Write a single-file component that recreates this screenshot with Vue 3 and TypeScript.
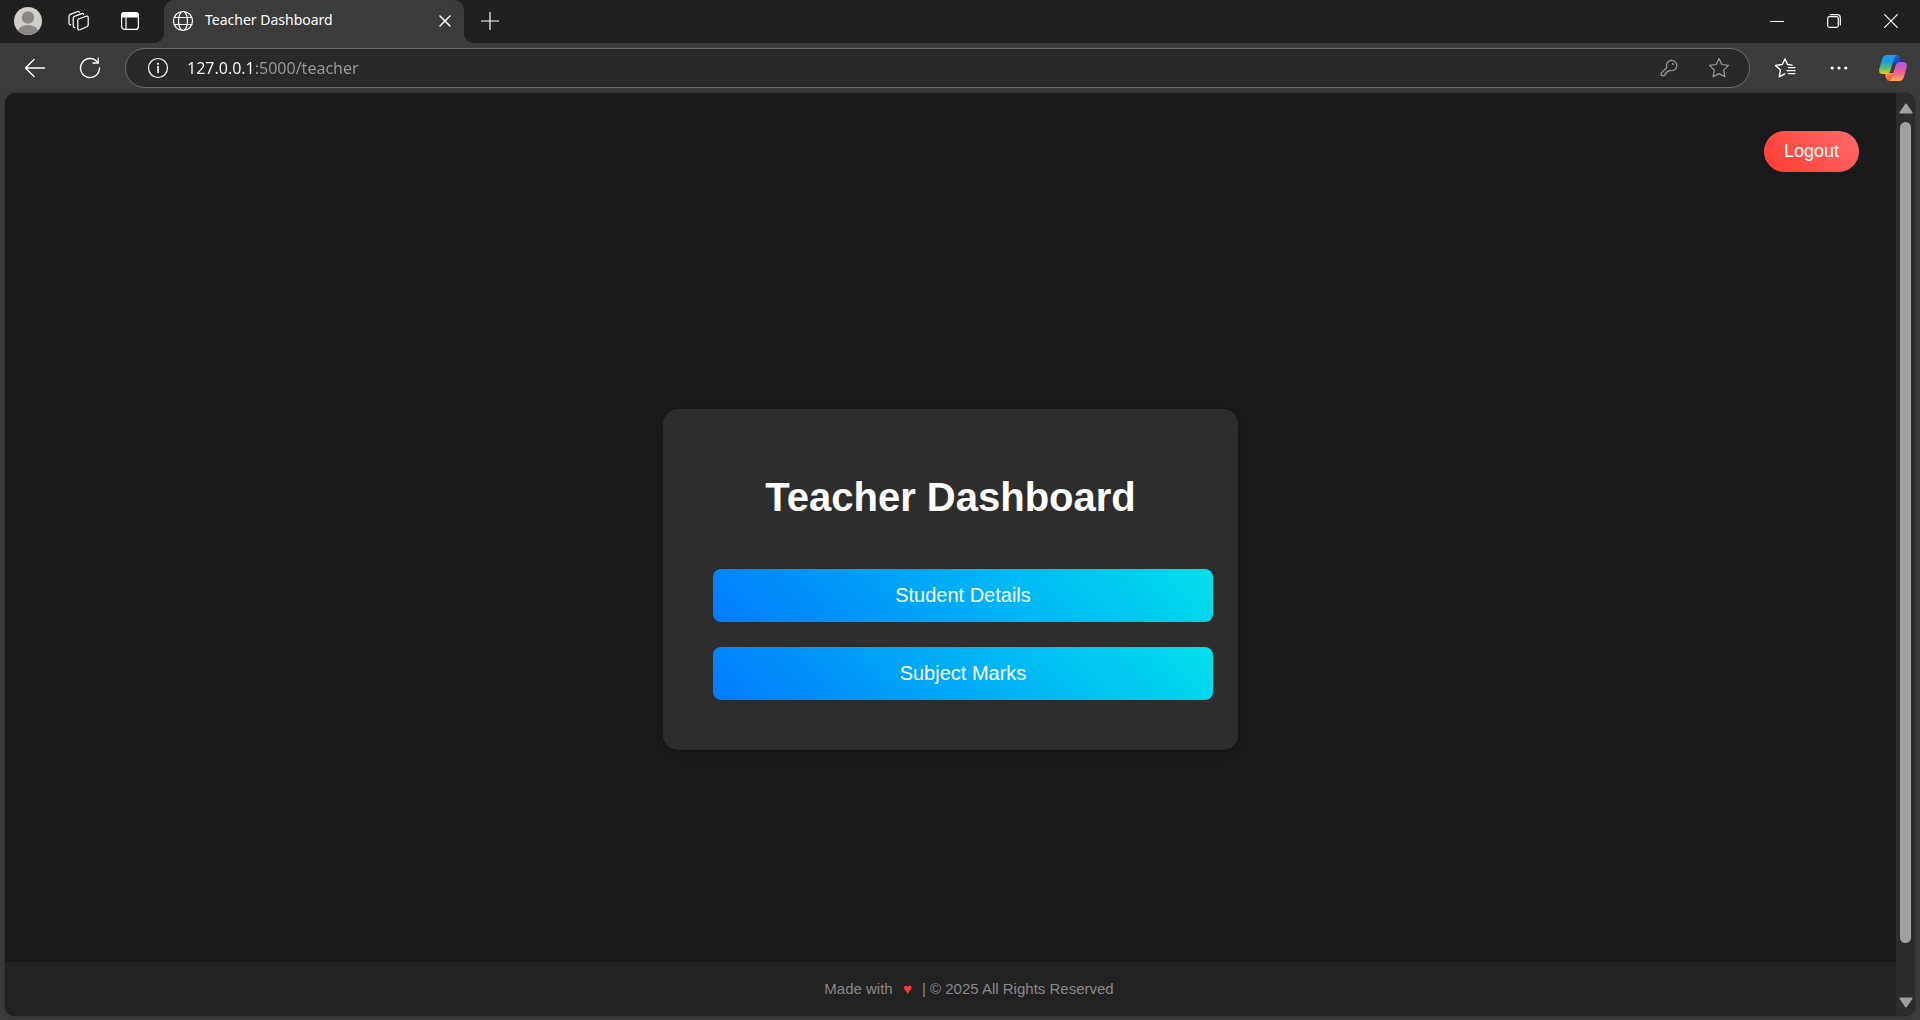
<script setup lang="ts">
import { ref } from 'vue'

interface MenuEntry {
  label: string
  href: string
}

const title = 'Teacher Dashboard'
const address = ref('127.0.0.1:5000/teacher')
const entries: MenuEntry[] = [
  { label: 'Student Details', href: '#student-details' },
  { label: 'Subject Marks', href: '#subject-marks' },
]
</script>

<template>
  <div class="browser">
    <header class="tab-bar">
      <button class="tool" type="button" aria-label="Profile">
        <svg width="28" height="28" viewBox="0 0 28 28">
          <defs>
            <clipPath id="avatar-clip"><circle cx="14" cy="14" r="14" /></clipPath>
          </defs>
          <circle cx="14" cy="14" r="14" fill="#d0cecb" />
          <g clip-path="url(#avatar-clip)" fill="#8c8886">
            <circle cx="14" cy="10.5" r="6.2" />
            <ellipse cx="14" cy="25" rx="10.5" ry="7" />
          </g>
        </svg>
      </button>
      <button class="tool" type="button" aria-label="Workspaces">
        <svg class="line" width="22" height="22" viewBox="0 0 22 22">
          <path d="M10.4 9 L18.2 6.2 Q20.2 5.6 20.2 7.6 V14.8 Q20.2 16.2 18.9 16.8 L12 19.8 Q9.8 20.6 9.8 18.4 V10.2 Q9.8 9.3 10.4 9 Z" />
          <path d="M6.9 17.6 Q5.2 17.6 5.2 15.8 V8.4 Q5.2 7 6.5 6.4 L13.6 3.6 Q15.2 3 15.6 4.6" />
          <path d="M2.7 14.8 Q1 14.8 1 13 V6.4 Q1 5 2.3 4.4 L9.4 1.6 Q11 1 11.4 2.4" />
        </svg>
      </button>
      <button class="tool" type="button" aria-label="Tab actions">
        <svg class="line" width="20" height="20" viewBox="0 0 20 20">
          <rect x="1.6" y="1.6" width="16.8" height="16.8" rx="3" />
          <path d="M1.6 6 V4.5 Q1.6 1.5 4.6 1.5 H15.4 Q18.4 1.5 18.4 4.5 V6 Z" fill="#fff" />
          <path d="M6 6 V18" />
        </svg>
      </button>

      <div class="tab">
        <svg class="line" width="22" height="22" viewBox="0 0 22 22">
          <circle cx="11" cy="11" r="9.5" />
          <ellipse cx="11" cy="11" rx="4.5" ry="9.5" />
          <path d="M2.4 7.5 H19.6 M2.4 14.5 H19.6" />
        </svg>
        <span class="tab-title">{{ title }}</span>
        <button class="tab-close" type="button" aria-label="Close tab">
          <svg class="line" width="12" height="12" viewBox="0 0 12 12">
            <path d="M1 1 L11 11 M11 1 L1 11" stroke-width="1.5" />
          </svg>
        </button>
      </div>
      <button class="tool" type="button" aria-label="New tab">
        <svg class="line" width="18" height="18" viewBox="0 0 18 18">
          <path d="M9 .5 V17.5 M.5 9 H17.5" />
        </svg>
      </button>

      <div class="window-controls">
        <button type="button" aria-label="Minimize">
          <svg class="line" width="14" height="14" viewBox="0 0 14 14">
            <path d="M.5 7.5 H13.5" stroke-width="1" />
          </svg>
        </button>
        <button type="button" aria-label="Restore">
          <svg class="line" width="14" height="14" viewBox="0 0 14 14">
            <rect x=".7" y="2.7" width="10.6" height="10.6" rx="1.8" />
            <path d="M3.2 .7 H10.3 Q13.3 .7 13.3 3.7 V10.8" />
          </svg>
        </button>
        <button type="button" aria-label="Close window">
          <svg class="line" width="14" height="14" viewBox="0 0 14 14">
            <path d="M.7 .7 L13.3 13.3 M13.3 .7 L.7 13.3" />
          </svg>
        </button>
      </div>
    </header>

    <div class="toolbar">
      <button class="nav" type="button" aria-label="Back">
        <svg class="line" width="22" height="20" viewBox="0 0 22 20">
          <path d="M20.5 10 H1.5 M10 1.5 L1.5 10 L10 18.5" stroke-width="1.4" />
        </svg>
      </button>
      <button class="nav" type="button" aria-label="Refresh">
        <svg class="line" width="22" height="22" viewBox="0 0 22 22">
          <path d="M18.8 5.6 A9.5 9.5 0 1 0 20.5 11" stroke-width="1.4" />
          <path d="M19.3 1.2 V6 H14" stroke-width="1.4" />
        </svg>
      </button>
      <form class="address" @submit.prevent>
        <button type="button" aria-label="Site information">
          <svg class="line" width="22" height="22" viewBox="0 0 22 22">
            <circle cx="11" cy="11" r="9.5" />
            <path d="M11 9.5 V15.5" stroke-width="1.6" />
            <circle cx="11" cy="6.8" r="1.1" fill="#fff" stroke="none" />
          </svg>
        </button>
        <input v-model="address" type="text" aria-label="Address" spellcheck="false" />
        <button type="button" aria-label="Passwords">
          <svg class="line dim" width="18" height="18" viewBox="0 0 18 18">
            <path d="M6.8 8.5 A5.2 5.2 0 1 1 9.6 11.3 L8.6 12.3 H7 V14 H5.2 V15.8 Q5.2 16.6 4.4 16.6 H1.9 Q1.2 16.6 1.2 15.9 V14.2 Z" />
            <circle cx="13" cy="5" r="1" class="dim-fill" />
          </svg>
        </button>
        <button type="button" aria-label="Add to favorites">
          <svg class="line dim" width="22" height="22" viewBox="0 0 22 22">
            <path d="M11 1.5 L13.8 7.5 L20.5 8.4 L15.6 13.1 L16.9 19.8 L11 16.6 L5.1 19.8 L6.4 13.1 L1.5 8.4 L8.2 7.5 Z" />
          </svg>
        </button>
      </form>
      <button class="side" type="button" aria-label="Favorites">
        <svg class="line" width="22" height="22" viewBox="0 0 22 22">
          <path d="M18 8.1 L13.6 7.5 L11 1.8 L8.3 7.5 L1.6 8.4 L6.4 13.1 L5.2 19.8 L10.6 16.9" stroke-width="1.4" />
          <path d="M14.5 10.6 H21 M13 13.6 H21 M14.5 16.6 H21" stroke-width="1.4" />
        </svg>
      </button>
      <button class="side" type="button" aria-label="Settings and more">
        <svg width="18" height="6" viewBox="0 0 18 6" fill="#fff">
          <circle cx="2.2" cy="3" r="1.6" />
          <circle cx="9" cy="3" r="1.6" />
          <circle cx="15.8" cy="3" r="1.6" />
        </svg>
      </button>
      <button class="side" type="button" aria-label="Copilot">
        <svg width="28" height="26" viewBox="0 0 28 26">
          <defs>
            <linearGradient id="cp-left" x1="0" y1="0" x2="0" y2="1">
              <stop offset="0" stop-color="#1b9cf0" />
              <stop offset=".35" stop-color="#1c9fd8" />
              <stop offset=".65" stop-color="#52b87a" />
              <stop offset="1" stop-color="#f6cf0a" />
            </linearGradient>
            <linearGradient id="cp-right" x1="0" y1="0" x2="0" y2="1">
              <stop offset="0" stop-color="#a45cf0" />
              <stop offset=".5" stop-color="#ef5a94" />
              <stop offset="1" stop-color="#fdae58" />
            </linearGradient>
            <linearGradient id="cp-top" x1="0" y1="0" x2="1" y2="1">
              <stop offset="0" stop-color="#1a78e8" />
              <stop offset="1" stop-color="#1636b8" />
            </linearGradient>
            <linearGradient id="cp-bottom" x1="0" y1="0" x2="1" y2="1">
              <stop offset="0" stop-color="#ffa03c" />
              <stop offset="1" stop-color="#f0483e" />
            </linearGradient>
          </defs>
          <path d="M13 0 H17.5 Q20 0 20.8 2.6 L22.2 8 H15 L13 8 Z" fill="url(#cp-top)" />
          <path d="M15 26 H10.5 Q8 26 7.2 23.4 L5.8 18 H13 L15 18 Z" fill="url(#cp-bottom)" />
          <path d="M8 0 H18 Q16 .4 15.2 3 L11.4 15.6 Q10.3 19 7 19 H4 Q-1 19 .4 13.6 L3 4.2 Q4.2 0 8 0 Z" fill="url(#cp-left)" />
          <path d="M20 26 H10 Q12 25.6 12.8 23 L16.6 10.4 Q17.7 7 21 7 H24 Q29 7 27.6 12.4 L25 21.8 Q23.8 26 20 26 Z" fill="url(#cp-right)" />
        </svg>
      </button>
    </div>

    <div class="viewport">
      <div class="page">
        <div class="top">
          <button class="logout" type="button">Logout</button>
        </div>
        <main class="content">
          <section class="card">
            <h1>{{ title }}</h1>
            <nav class="menu">
              <a v-for="entry in entries" :key="entry.href" :href="entry.href">{{ entry.label }}</a>
            </nav>
          </section>
        </main>
        <footer class="footer">
          <p>Made with <span class="heart">♥</span> | © 2025 All Rights Reserved</p>
        </footer>
      </div>
      <div class="scrollbar" aria-hidden="true">
        <svg width="14" height="11" viewBox="0 0 14 11">
          <path d="M7 1.5 L12.5 9.5 H1.5 Z" />
        </svg>
        <div class="thumb"></div>
        <svg width="14" height="11" viewBox="0 0 14 11">
          <path d="M7 9.5 L12.5 1.5 H1.5 Z" />
        </svg>
      </div>
    </div>
  </div>
</template>

<style>
body {
  background: #3b3b3b;
}
</style>

<style scoped>
.browser {
  display: flex;
  flex-direction: column;
  min-height: 100vh;
  box-sizing: border-box;
  background: #3b3b3b;
  color: #fff;
  font-family: "Noto Sans", "Open Sans", sans-serif;
}

button {
  display: flex;
  align-items: center;
  justify-content: center;
  padding: 0;
  border: 0;
  background: none;
  color: inherit;
}

svg {
  display: block;
  flex: none;
}

.line {
  fill: none;
  stroke: #fff;
  stroke-width: 1.2;
  stroke-linejoin: round;
  stroke-linecap: round;
}

.dim {
  stroke: #9a9a9a;
}

.dim-fill {
  fill: #9a9a9a;
  stroke: none;
}

.tab-bar {
  display: flex;
  height: 43px;
  padding: 0 1px 0 2px;
  background: #202020;
}

.tool {
  width: 51px;
  padding-bottom: 1px;
}

.tab {
  position: relative;
  display: flex;
  align-items: center;
  width: 300px;
  box-sizing: border-box;
  margin-left: 9px;
  padding: 0 13px 1px 8px;
  border-radius: 10px 10px 0 0;
  background: #3b3b3b;
}

.tab::before,
.tab::after {
  content: "";
  position: absolute;
  bottom: 0;
  width: 10px;
  height: 10px;
}

.tab::before {
  right: 100%;
  background: radial-gradient(circle at 0 0, #202020 10px, #3b3b3b 10px);
}

.tab::after {
  left: 100%;
  background: radial-gradient(circle at 100% 0, #202020 10px, #3b3b3b 10px);
}

.tab-title {
  flex: 1;
  margin-left: 11px;
  padding-bottom: 2px;
  font-size: 14px;
  line-height: 20px;
}

.window-controls {
  display: flex;
  margin-left: auto;
}

.window-controls button {
  width: 57px;
  padding-bottom: 1px;
}

.toolbar {
  display: flex;
  align-items: center;
  height: 50px;
  padding-left: 7px;
}

.nav {
  width: 55px;
  height: 40px;
}

.address {
  display: flex;
  flex: 1;
  align-items: center;
  height: 40px;
  box-sizing: border-box;
  margin: 0 8px;
  padding: 0 5px 0 7px;
  border: 1px solid #6b6b6b;
  border-radius: 20px;
  background: #292929;
}

.address button {
  width: 50px;
  height: 38px;
}

.address input {
  flex: 1;
  min-width: 0;
  height: 26px;
  padding: 0 0 0 4px;
  border: 0;
  outline: 0;
  background: linear-gradient(90deg, #fff 72px, #9a9a9a 72px);
  background-clip: text;
  -webkit-background-clip: text;
  color: transparent;
  font-family: inherit;
  font-size: 16px;
}

.side {
  width: 54px;
  height: 40px;
}

.viewport {
  display: flex;
  flex: 1;
  margin: 0 5px 4px;
  border-radius: 10px;
  overflow: hidden;
  background: #1a1a1a;
  box-shadow: 0 0 3px #2b2b2b;
}

.page {
  display: flex;
  flex: 1;
  flex-direction: column;
  font-family: "Liberation Sans", Arial, sans-serif;
}

.top {
  display: flex;
  justify-content: flex-end;
  padding: 38px 37px 25px;
}

.logout {
  padding: 10px 20px;
  border-radius: 25px;
  background: linear-gradient(45deg, #ff3b30, #ff6b6b);
  font-family: inherit;
  font-size: 18px;
  line-height: 21px;
}

.content {
  display: flex;
  flex: 1;
  align-items: center;
  justify-content: center;
}

.card {
  width: 575px;
  max-width: 100%;
  box-sizing: border-box;
  padding: 65px 25px 50px 50px;
  border-radius: 15px;
  background: #2d2d2d;
  box-shadow: 0 5px 19px rgba(0, 0, 0, 0.2);
}

h1 {
  margin: 0 25px 49px 0;
  font-size: 40px;
  line-height: 46px;
  text-align: center;
}

.menu {
  display: flex;
  flex-direction: column;
  gap: 25px;
}

.menu a {
  padding: 15px;
  border-radius: 8px;
  background: linear-gradient(45deg, #007bff, #00e0eb);
  color: #fff;
  font-size: 20px;
  line-height: 23px;
  text-align: center;
  text-decoration: none;
}

.footer {
  padding: 18px 0 18px 37px;
  background: #222;
  color: #888;
  text-align: center;
}

.footer p {
  margin: 0;
  font-size: 15px;
  line-height: 18px;
}

.heart {
  margin: 0 6px;
  color: #ff3b3b;
}

.scrollbar {
  display: flex;
  flex-direction: column;
  align-items: center;
  gap: 8px;
  width: 19px;
  box-sizing: border-box;
  padding: 10px 0 8px;
  background: #2c2c2c;
}

.scrollbar svg {
  fill: #a0a0a0;
  stroke: #a0a0a0;
  stroke-width: 2;
  stroke-linejoin: round;
}

.thumb {
  flex: 1;
  width: 11px;
  margin-bottom: 46px;
  border-radius: 6px;
  background: #a0a0a0;
}
</style>
